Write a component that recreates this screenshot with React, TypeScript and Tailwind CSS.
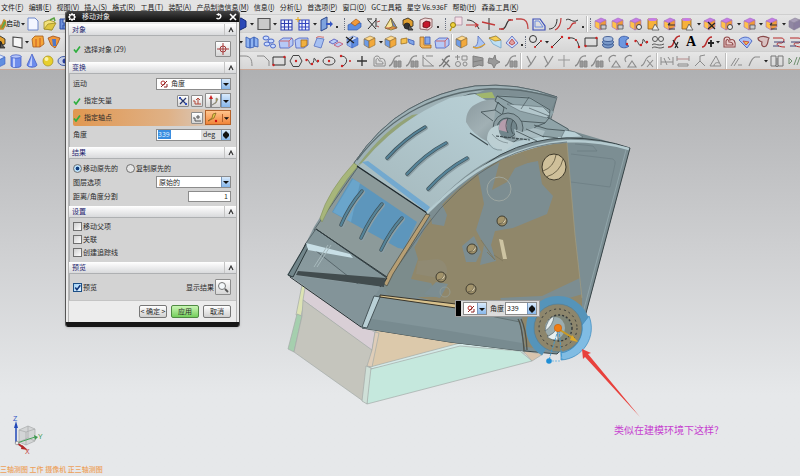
import type { ReactNode } from 'react';

const cube = (top: string, left: string, right: string, edge = '#6b5a86') => (
  <g stroke={edge} strokeWidth=".6" strokeLinejoin="round">
    <path d="M2 5 8 2l5 2-6 3z" fill={top} />
    <path d="M2 5l5 2v7l-5-3z" fill={left} />
    <path d="M7 7l6-3v7l-6 3z" fill={right} />
  </g>
);

const violetCube = cube('#c77be8', '#ffc24a', '#f09a3a', '#a06ac0');
const blueCube = cube('#dbe8ff', '#8fb4ef', '#5f8ee0', '#3c5fc0');
const goldCube = cube('#ffd98a', '#6d9be6', '#f2a93c', '#8a6a34');

const gray = '#8b8b8b';

const icons: Record<string, ReactNode> = {
  start: <path d="M5 13 9 4l3 2-4 7zM3 5l3 7" fill="#5aa84a" stroke="#c58a2b" strokeWidth="1.5" />,
  file: <path d="M3 2h7l3 3v9H3z" fill="#f3f6ff" stroke="#6c86c8" />,
  folder: (
    <g stroke="#9c8a2a" strokeWidth=".8">
      <path d="M2 6l5-2 6 2-3 8-8-1z" fill="#f3e27a" />
      <path d="M2 13l4-5 8-1-4 7z" fill="#e0c63f" />
      <path d="M8 4l4-2 1 3" fill="none" stroke="#58a03c" strokeWidth="1.5" />
    </g>
  ),
  save: <path d="M2 3h11v10H2zM5 3v4h6V3M5 13v-4h6v4" fill="#6f93dc" stroke="#2f4fa5" />,
  shade: <path d="M2 4l6-2 5 3v6l-6 3-5-4z" fill="#2c49b8" stroke="#152a78" />,
  frame: <path d="M2 2.500h12v11H2z" fill="#c9c9c9" stroke="#555" strokeWidth="1.200" />,
  grid: (
    <g fill="none" stroke="#2d3fb0" strokeWidth="1.100">
      <path d="M3 4h11v10H3zM3 7.500h11M3 11h11M6.500 4v10M10.500 4v10" fill="#f2f4ff" />
    </g>
  ),
  gridNew: (
    <g fill="none" stroke="#3448c0" strokeWidth="1.100">
      <path d="M4 4h10v10H4zM4 7.500h10M4 11h10M7 4v10M10.500 4v10" fill="#f2f4ff" />
      <path d="M3 1v5M.5 3.500h5" stroke="#e0a92a" />
    </g>
  ),
  door: (
    <g>
      <path d="M3 4l6-3v11l-6 3z" fill="#7ea3de" stroke="#2c478c" />
      <path d="M8 7h4V5l3 3-3 3V9H8z" fill="#3556c2" />
    </g>
  ),
  block: (
    <g>
      <path d="M1 9l4-2h9v4l-4 3H1z" fill="#5c8de0" stroke="#3059ac" strokeWidth=".7" />
      <path d="M4 7l5-4 4 3-5 4z" fill="#f19a39" stroke="#a0571b" strokeWidth=".7" />
    </g>
  ),
  axes: (
    <g fill="none" stroke="#2b2b2b">
      <path d="M3 13 11 4M3 4l8 9M2 3h5M11 2v9" />
      <path d="M12 6l3-1M12 10l2 1" stroke="#b14a4a" />
    </g>
  ),
  pyramid: (
    <g strokeWidth=".8" stroke="#7b6a3b">
      <path d="M8 2l6 10-6 2-6-2z" fill="#f1d04a" />
      <path d="M8 2l2 8-5 3-3-1z" fill="#f7e69a" />
      <path d="M8 2l6 10-4-2z" fill="#6f8ddc" />
      <path d="M3 12h10" stroke="#b33" />
    </g>
  ),
  gearbox: (
    <g stroke="#222" strokeWidth=".8">
      <path d="M3 4l5-2 5 3v5l-5 2-5-3z" fill="#e0a030" />
      <circle cx="7" cy="10" r="3" fill="#333" />
      <path d="M9 9l4 5H8z" fill="#555" />
    </g>
  ),
  redCube: (
    <g>
      <path d="M2 4l5-2 7 1v8l-4 3-8-1z" fill="#f2dada" stroke="#7c4e4e" strokeWidth=".8" />
      <path d="M5 7l3-2 4 1v4l-3 2-4-1z" fill="#c5172b" stroke="#5e0710" strokeWidth=".8" />
    </g>
  ),
  key: (
    <g>
      <path d="M7 1h7v8H7z" fill="#f6dfe6" stroke="#a78ba0" strokeWidth=".8" />
      <circle cx="5" cy="9" r="2.500" fill="#f0d23c" stroke="#927b14" />
      <path d="M4 11l-2 4" stroke="#c2a021" strokeWidth="1.500" />
    </g>
  ),
  trim: (
    <g fill="none">
      <path d="M2 4c6 0 9 3 12 9" stroke="#333" />
      <path d="M1 9h12M10 7l3 2-3 2" stroke="#c23a3a" strokeWidth="1.200" />
    </g>
  ),
  cross: (
    <g fill="none">
      <path d="M8 2v12" stroke="#333" />
      <path d="M1 6l13 3" stroke="#c23a3a" strokeWidth="1.300" />
    </g>
  ),
  sCurve: (
    <g fill="none">
      <path d="M3 13c7 1 4-10 10-9" stroke="#333" strokeWidth="1.200" />
      <path d="M1 13h5M10 4h5" stroke="#c23a3a" strokeWidth="1.500" />
    </g>
  ),
  corner: <path d="M1 3h5c5 0 7 4 7 10" fill="none" stroke="#c24a4a" strokeWidth="1.300" />,
  pent: (
    <g fill="none">
      <path d="M2 3h7l5 7v4H2z" stroke="#3d4fb8" strokeWidth="1.200" />
      <path d="M4 5h4l4 6H4z" stroke="#6c8be0" />
    </g>
  ),
  offset: (
    <g fill="none">
      <path d="M1 13c5 0 8-4 8-10" stroke="#333" />
      <path d="M7 14c4-2 6-6 6-12" stroke="#c23a3a" strokeWidth="1.200" />
    </g>
  ),
  bridge: (
    <g fill="none">
      <path d="M2 4c4-3 6 4 12 0" stroke="#333" />
      <path d="M3 13c6 0 2-7 9-6" stroke="#c23a3a" strokeWidth="1.300" />
    </g>
  ),
  vCube: violetCube,
  vCubeA: (
    <g>
      {violetCube}
      <path d="M8 9h5v4H8z" fill="#c9c9cf" stroke="#555" strokeWidth=".8" />
    </g>
  ),
  vCubeB: (
    <g>
      {violetCube}
      <circle cx="11" cy="11" r="2.500" fill="#eee" stroke="#444" />
    </g>
  ),
  vCyl: (
    <g>
      <path d="M3 3h9v10H3z" fill="#f7b13a" stroke="#8d5a1c" strokeWidth=".8" />
      <ellipse cx="7.500" cy="3.500" rx="4.500" ry="1.500" fill="#c77be8" />
      <path d="M10 8l4 6H7z" fill="#eee" stroke="#555" strokeWidth=".8" />
    </g>
  ),
  vCubeC: (
    <g>
      {violetCube}
      <path d="M6 9h7M6 9l2-2M13 13H7" stroke="#333" strokeWidth="1.200" fill="none" />
    </g>
  ),
  vCubeX: (
    <g>
      {violetCube}
      <path d="M6 6l7 7M13 7l-7 6" stroke="#222" strokeWidth="1.200" />
    </g>
  ),
  ghost: cube('#a99fb8', '#9087a3', '#8a7fa0', '#8a8298'),
  plane: <path d="M4 3l9 1v10l-9-2z" fill="#f6f6f6" stroke="#444" strokeWidth="1.100" />,
  orange: (
    <g stroke="#a35a1c" strokeWidth=".8">
      <path d="M2 5l3-3h8l1 8-4 3H3z" fill="#f4a63a" />
      <path d="M6 5v8M10 4v9" stroke="#c3471d" />
    </g>
  ),
  funnel: (
    <g strokeWidth=".8">
      <path d="M2 4l5-2 7 2-2 5-3 5-4-3z" fill="#f0963a" stroke="#994f1a" />
      <path d="M6 5h4v7H7z" fill="#5078c8" />
    </g>
  ),
  flag: (
    <g stroke="#3d62b8" strokeWidth=".9">
      <path d="M2 3l4 2v9l-4-1zM6 5l4-2v10l-4 1zM10 3l4 2v8l-4-1z" fill="#8fb3f0" />
    </g>
  ),
  chain: (
    <g fill="#cbdcff" stroke="#4a68c8">
      <ellipse cx="5" cy="4" rx="3" ry="2" />
      <ellipse cx="10" cy="7" rx="3" ry="2" />
      <ellipse cx="6" cy="10" rx="3" ry="2" />
      <ellipse cx="12" cy="12" rx="2.500" ry="2" />
    </g>
  ),
  slab: (
    <g stroke="#4a60c0" strokeWidth=".8">
      <path d="M1 7l4-3h9l1 2v5l-4 3H2z" fill="#b6c9f6" />
      <path d="M2 7h9v6M11 7l3-3" fill="none" stroke="#d0524f" />
    </g>
  ),
  slabGold: (
    <g stroke="#4a60c0" strokeWidth=".8">
      <path d="M1 6l4-2h9v7l-4 3H2z" fill="#b6c9f6" />
      <path d="M7 6h6v5l-3 2H7z" fill="#f1b03f" stroke="#a56d1d" />
    </g>
  ),
  sheet: (
    <g strokeWidth=".8">
      <path d="M3 12L6 4l7 1-3 9z" fill="#a6c0f2" stroke="#5570c0" />
      <path d="M5 4c3-3 6 0 8-1" fill="none" stroke="#cf4848" />
    </g>
  ),
  pads: (
    <g fill="#b9cdf7" stroke="#5b5fc0" strokeWidth=".9">
      <path d="M1 8l5-3 4 2-5 3z" />
      <path d="M6 11l5-3 4 2-5 3z" stroke="#c45a78" />
    </g>
  ),
  cutCube: (
    <g>
      {blueCube}
      <path d="M1 3l8 6M2 9l6-6" stroke="#222" strokeWidth="1.200" />
    </g>
  ),
  bCube: blueCube,
  gCube: goldCube,
  patch: (
    <g strokeWidth=".8">
      <path d="M1 5l6-1v5l-6 1z" fill="#f5c150" stroke="#a0701e" />
      <path d="M8 5l6 2v4l-5-2z" fill="#80a6ea" stroke="#3c5cb0" />
    </g>
  ),
  bucket: (
    <g strokeWidth=".8">
      <path d="M3 3h4v8h7v3H5l-2-2z" fill="#f2b45a" stroke="#a0651e" />
      <path d="M8 3h5v7H8z" fill="#87a9ea" stroke="#3c5cb0" />
    </g>
  ),
  wedge: (
    <g strokeWidth=".8">
      <path d="M2 13c5 0 5-6 5-11l7 8c-3 4-8 5-12 3z" fill="#a9c4f4" stroke="#5570c0" />
      <path d="M2 13c3 2 8 0 12-3" fill="none" stroke="#dca12f" strokeWidth="1.500" />
    </g>
  ),
  ramp: (
    <g strokeWidth=".8">
      <path d="M2 4l7-2 5 4v8l-8-4z" fill="#bfe0f4" stroke="#6fa1c8" />
      <path d="M2 4l7-2 5 4-6 1z" fill="#f6cf53" stroke="#a8802a" />
    </g>
  ),
  diamond: (
    <g fill="#d4e0fb" stroke="#5b6cc0" strokeWidth=".9">
      <path d="M8 2l6 7-6 5-6-5z" />
      <path d="M8 5l3 4-3 2-3-2z" fill="#e0a1a1" stroke="#b44" />
    </g>
  ),
  circCurve: (
    <g fill="none">
      <circle cx="5" cy="5" r="3.500" stroke="#333" />
      <path d="M7 13l6-6" stroke="#333" />
      <circle cx="7" cy="13" r="1" fill="#c22" />
      <circle cx="13" cy="7" r="1" fill="#c22" />
    </g>
  ),
  line: (
    <g>
      <path d="M3 13 13 3" stroke="#333" />
      <circle cx="3" cy="13" r="1.200" fill="#c22" />
      <circle cx="13" cy="3" r="1.200" fill="#c22" />
    </g>
  ),
  arc: (
    <g>
      <path d="M3 4c6-1 9 3 10 9" stroke="#333" fill="none" />
      <circle cx="3" cy="4" r="1.200" fill="#c22" />
      <circle cx="13" cy="13" r="1.200" fill="#c22" />
      <circle cx="10" cy="6" r="1.100" fill="#c22" />
    </g>
  ),
  rect: (
    <g>
      <path d="M2 4h12v8H2z" stroke="#333" fill="none" />
      <circle cx="2.500" cy="12" r="1.200" fill="#c22" />
      <circle cx="13.500" cy="4" r="1.200" fill="#c22" />
    </g>
  ),
  rolls: (
    <g fill="#7898c8" stroke="#2d4a85" strokeWidth=".8">
      <ellipse cx="8" cy="11" rx="5.500" ry="3" />
      <ellipse cx="8" cy="8" rx="5.500" ry="3" />
      <ellipse cx="8" cy="5" rx="5" ry="2.500" fill="#a5bce0" />
    </g>
  ),
  wrap: (
    <g>
      <path d="M3 5c2-4 8-3 10-1l-3 2v5l3 1c-3 3-9 2-10-1z" fill="#6e97df" stroke="#3052a0" strokeWidth=".8" />
      <circle cx="11" cy="10" r="1.200" fill="#c22" />
    </g>
  ),
  spline: (
    <g>
      <path d="M2 7c3-3 3 6 6 4s1-8 3-5 2 4 4 2" stroke="#444" fill="none" />
      <circle cx="2.500" cy="7" r="1.200" fill="#c22" />
      <circle cx="8" cy="11" r="1.200" fill="#c22" />
      <circle cx="14" cy="8" r="1.200" fill="#c22" />
    </g>
  ),
  rings: (
    <g fill="none" stroke="#555">
      <circle cx="5" cy="5" r="2.500" />
      <circle cx="11" cy="5" r="2.500" />
      <path d="M2 11c3-3 5 2 12-1M2 14c4-3 6 2 12-1" />
    </g>
  ),
  redS: (
    <g fill="none">
      <path d="M2 13c8 1 4-11 12-11" stroke="#b82a2a" strokeWidth="1.500" />
      <path d="M7 6l5 8M12 8l-3 6" stroke="#222" strokeWidth="1.200" />
    </g>
  ),
  redDots: (
    <g fill="none">
      <path d="M2 13c6 0 3-10 10-10" stroke="#b82a2a" strokeWidth="1.500" />
      <path d="M11 6v7M8 9h6" stroke="#222" strokeWidth="1.800" />
    </g>
  ),
  pinkLoop: (
    <g fill="none" stroke="#8f4646" strokeWidth="1.100">
      <path d="M3 6c0-4 6-4 6 0 4-2 6 2 5 7H3z" fill="#ead0d0" />
      <path d="M5 7c1-3 3-1 3 1 2 0 4 0 4 3H5z" />
    </g>
  ),
  fan: (
    <g strokeWidth=".9">
      <path d="M1 6c4-4 10-4 13 1l-5 7z" fill="#a9c2f6" stroke="#4a63c0" />
      <path d="M5 7l6 1-3 3z" fill="#e9c44a" stroke="#c44" />
    </g>
  ),
  shield: <path d="M3 4c3-2 7-2 11 0-2 3 0 5-3 8-3 2-5-1-4-4-2-1-4-1-4-4z" fill="#d9c2c2" stroke="#8a4a4a" strokeWidth="1.200" />,
  weave: (
    <g fill="none">
      <path d="M2 4h8c5 0 3 6-1 5s-5 4 5 4" stroke="#b82a2a" />
      <path d="M3 8h11M2 12h6" stroke="#447" />
    </g>
  ),
  cylinder: (
    <g stroke="#3a55c0" strokeWidth=".7">
      <path d="M3 3v10c1 2 9 2 10 0V3z" fill="#6d8cec" />
      <path d="M5 4h2v10H5z" fill="#c3d0fb" stroke="none" />
      <ellipse cx="8" cy="3.500" rx="5" ry="1.700" fill="#b5c6fa" />
    </g>
  ),
  cone: (
    <g>
      <path d="M8 1l5 11c-1 3-9 3-10 0z" fill="#6d8cec" stroke="#3a55c0" strokeWidth=".7" />
      <path d="M8 2v11H5z" fill="#c3d0fb" />
    </g>
  ),
  ball: (
    <g>
      <circle cx="8" cy="8" r="5" fill="#e8cf2c" stroke="#a28d18" strokeWidth=".7" />
      <circle cx="6.500" cy="6" r="2" fill="#fbf2a8" />
    </g>
  ),
  eye: (
    <g>
      <ellipse cx="8" cy="8" rx="6" ry="4.500" fill="#c5cfe8" stroke="#455ea8" />
      <circle cx="9" cy="8" r="2.500" fill="#2c3f9c" />
    </g>
  ),
  grayArc: <path d="M2 3h5c5 0 7 3 7 10" fill="none" stroke={gray} />,
  grayBend: <path d="M2 3h7l5 5v5" fill="none" stroke={gray} />,
  hexagon: (
    <g>
      <path d="M5 2.500h6l3 5.500-3 5.500H5L2 8z" fill="none" stroke="#444" />
      <circle cx="8" cy="8" r="1.200" fill="#c22" />
    </g>
  ),
  ellipse: (
    <g>
      <ellipse cx="8" cy="8" rx="6" ry="4" fill="none" stroke="#444" />
      <circle cx="8" cy="8" r="1.200" fill="#c22" />
    </g>
  ),
  bow: (
    <g>
      <path d="M4 3c6 0 8 6 2 10" fill="none" stroke="#444" />
      <circle cx="4" cy="3" r="1.200" fill="#c22" />
      <circle cx="5" cy="13" r="1.200" fill="#c22" />
      <circle cx="13" cy="8" r="1" fill="#c22" />
    </g>
  ),
  plus: <path d="M8 3v10M3 8h10" stroke="#333" strokeWidth="1.300" />,
  gLoop: (
    <g fill="none" stroke={gray}>
      <path d="M3 6c0-4 6-4 6 0 4-2 6 2 5 7H3z" />
      <path d="M5 7c1-3 3-1 3 1 2 0 4 0 4 3H5z" />
    </g>
  ),
  gCurveBox: (
    <g stroke={gray}>
      <path d="M2 13C7 12 5 2 13 3" fill="none" strokeWidth="1.300" />
      <path d="M7 8h3v6H7zM11 8h3v6h-3z" fill="#999" />
    </g>
  ),
  gSlope: <path d="M3 2v11h11M3 4l10 9M6 3l7 0" fill="none" stroke={gray} />,
  gCross: <path d="M2 13C8 12 6 3 13 3M5 6l8 8M12 7l-6 7" fill="none" stroke="#777" strokeWidth="1.300" />,
  gShapes: (
    <g fill="none" stroke={gray}>
      <path d="M2 4h5M4.500 2v5M9 3h5v4H9z" />
      <circle cx="5" cy="11" r="2.500" />
      <circle cx="12" cy="11" r="2" />
    </g>
  ),
  gSheet: <path d="M3 3l10 2v8L9 12l-6 2zM3 9l10-2" fill="#999" stroke="#808080" />,
  gStar: <path d="M3 5l4 1 2-4 1 5 4 2-4 2-2 4-2-4-4-1z" fill="#999" stroke="#808080" />,
  gFork: <path d="M4 3l4 8 5-8M8 11l-3 3" fill="none" stroke={gray} strokeWidth="1.200" />,
  gPlus: <path d="M8 2v12M2 7h12" stroke="#999" />,
  gTri: <path d="M4 9c-3-4 2-8 6-6M10 8l4 6H6z" fill="none" stroke={gray} strokeWidth="1.100" />,
  gFx: <path d="M2 13C7 12 5 3 12 3M8 7l6 7M14 7l-6 7" fill="none" stroke={gray} strokeWidth="1.100" />,
  gDim: <path d="M2 4v8M14 4v8M2 9h12M5 5l3 7M9 4l2 3" fill="none" stroke={gray} />,
  gDimRed: (
    <g fill="none" stroke={gray}>
      <path d="M2 3v5M14 3v5M3 11h10v2H3z" />
      <path d="M2 6h12" stroke="#b48a8a" />
    </g>
  ),
  gFold: <path d="M3 13L8 8l5 5M8 8V3l5-1" fill="none" stroke={gray} />,
  gAngle: <path d="M2 13L8 3l5 10zM6 13c0-3 3-4 5-3" fill="none" stroke={gray} />,
  gPar: <path d="M3 13L8 5M6 13l5-8M10 12h4" fill="none" stroke={gray} />,
  gElbow: <path d="M3 13c2-5 3-8 6-9h5" fill="none" stroke={gray} strokeWidth="1.200" />,
  gBook: <path d="M2 3h5v10H2zM9 3h5v10H9zM8 5v7M6 12l2 2 2-2" fill="none" stroke="#777" />,
  gHatch: <path d="M2 5v6l3-3zM7 12l3-8M10 12l3-8" fill="none" stroke="#6f8f6f" />,
};

function ToolIcon({ name }: { name: string }) {
  if (name === '.') {
    return (
      <svg viewBox="0 0 4 16" className="h-4 w-1 shrink-0">
        <path d="M1 10h2v2H1z" fill="#333" />
      </svg>
    );
  }
  if (name === 'v') {
    return (
      <button type="button" aria-label="更多" className="h-4 w-1 shrink-0">
        <svg viewBox="0 0 4 16" className="h-4 w-1">
          <path d="M0 7h4L2 9.500z" fill="#222" />
        </svg>
      </button>
    );
  }
  if (name === 'A') {
    return (
      <button type="button" className="w-4 shrink-0 text-center font-['Liberation_Serif',serif] text-[14px] leading-4 font-bold text-black">
        A
      </button>
    );
  }
  return (
    <button type="button" aria-label={name} className="h-4 w-4 shrink-0">
      <svg viewBox="0 0 16 16" className="h-4 w-4">
        {icons[name]}
      </svg>
    </button>
  );
}

function ToolGroup({ items, className }: { items: string; className: string }) {
  return (
    <div className={`flex shrink-0 items-center justify-between ${className}`}>
      {items.split(' ').map((name, i) => (
        <ToolIcon key={i} name={name} />
      ))}
    </div>
  );
}

const Grip = () => <div className="mx-px h-3 w-[2px] shrink-0 border-l border-dotted border-gray-500" />;
const Divider = () => <div className="mx-px h-4 w-[2px] shrink-0 border-l border-[#bdbdbd] bg-white" />;

const menus = [
  ['文件', 'F'],
  ['编辑', 'E'],
  ['视图', 'V'],
  ['插入', 'S'],
  ['格式', 'R'],
  ['工具', 'T'],
  ['装配', 'A'],
  ['产品制造信息', 'M'],
  ['信息', 'I'],
  ['分析', 'L'],
  ['首选项', 'P'],
  ['窗口', 'O'],
  ['GC工具箱', ''],
  ['星空 V6.936F', ''],
  ['帮助', 'H'],
  ['森淼工具', 'K'],
];

function MenuBar() {
  return (
    <nav className="flex h-[14px] items-center gap-[5px] overflow-hidden pl-px whitespace-nowrap text-[#222]">
      {menus.map(([label, key]) => (
        <a key={label} href="#" className="shrink-0">
          {label}
          {key && (
            <>
              (<span className="underline">{key}</span>)
            </>
          )}
        </a>
      ))}
    </nav>
  );
}

function Toolbars() {
  const row = 'flex items-center overflow-hidden border-t border-[#cfcfcf] bg-linear-to-b from-[#e6e6e6] to-[#d6d6d6]';
  return (
    <div>
      <div className={`${row} h-[18px]`}>
        <div className="flex w-[74px] shrink-0 items-center justify-between">
          <button type="button" className="flex items-center">
            <svg viewBox="5 0 6 16" className="h-4 w-[6px]">{icons.start}</svg>
            启动
          </button>
          <ToolIcon name="v" />
          <ToolIcon name="file" />
          <ToolIcon name="folder" />
          <ToolIcon name="save" />
        </div>
        <ToolGroup className="ml-[159px] w-[106px]" items="shade v frame v grid gridNew v door ." />
        <div className="w-1 shrink-0" />
        <Grip />
        <ToolGroup className="w-[93px]" items="block axes pyramid gearbox redCube ." />
        <div className="w-1 shrink-0" />
        <Grip />
        <ToolGroup className="w-[137px]" items="key trim cross sCurve corner pent offset bridge ." />
        <Divider />
        <Grip />
        <ToolGroup className="w-[210px]" items="vCubeA vCubeA vCubeB vCyl vCubeC vCyl v vCubeX vCubeB v vCubeA v vCubeC v ghost" />
      </div>
      <div className={`${row} h-[19px]`}>
        <ToolGroup className="-ml-2 w-[70px]" items="gearbox plane v orange funnel" />
        <ToolGroup className="ml-[177px] w-[211px]" items="v flag chain slab slabGold sheet pads cutCube gCube v gCube patch bucket slab" />
        <Divider />
        <ToolGroup className="w-[70px]" items="gCube wedge ramp diamond ." />
        <Grip />
        <ToolGroup className="w-[276px]" items="circCurve v line arc rect rolls wrap spline rings redS A redDots v pinkLoop fan shield weave weave" />
      </div>
      <div className={`${row} h-[19px] border-b border-b-[#c9a898]`}>
        <ToolGroup className="-ml-2 w-[80px]" items="bCube cylinder cone ball eye" />
        <ToolGroup
          className="ml-[166px] w-[281px]"
          items="grayArc grayBend rect hexagon spline ellipse bow plus gLoop gCurveBox gCurveBox gSlope gCross gShapes gSheet gStar gCurveBox"
        />
        <Divider />
        <ToolGroup className="w-[132px]" items="gFork gFork gPlus gCurveBox gCurveBox gTri gTri gFx" />
        <Divider />
        <ToolGroup className="w-[65px]" items="gDim gDimRed gFold gAngle" />
        <Divider />
        <ToolGroup className="w-[75px]" items="gPar gElbow v gBook gHatch" />
      </div>
    </div>
  );
}

function Section({ title, className, children }: { title: string; className: string; children: ReactNode }) {
  return (
    <section>
      <h2 className="flex h-[11px] items-center justify-between bg-linear-to-b from-white to-[#d9dadc] pl-[3px] text-[#25256e]">
        {title}
        <button type="button" aria-label={`收起${title}`} className="flex h-[11px] w-3 items-center justify-center border-l border-[#c4c4c4]">
          <svg viewBox="0 0 8 8" className="h-2 w-2">
            <path d="M2 6l2-4 2 4" fill="none" stroke="#333" strokeWidth="1.200" />
          </svg>
        </button>
      </h2>
      <div className={`border-t border-l border-[#aeb0b2] bg-[#d3d3d3] pr-[5px] pl-[3px] ${className}`}>{children}</div>
    </section>
  );
}

const Check = () => (
  <svg viewBox="0 0 8 8" className="mr-[3px] h-2 w-2">
    <path d="M1 4.500l2 2.500L7 1.500" fill="none" stroke="#2fae3e" strokeWidth="1.700" />
  </svg>
);

function ArrowBox({ spin }: { spin?: boolean }) {
  return (
    <span className="pointer-events-none flex h-full w-[9px] shrink-0 items-center justify-center border-l border-[#7797bd] bg-linear-to-b from-[#d9eafb] to-[#86b6ea]">
      <svg viewBox="0 0 8 8" className="h-2 w-2">
        {spin ? <path d="M4 0l3 3v2L4 8 1 5V3z" fill="#111" /> : <path d="M1 3h6L4 6z" fill="#111" />}
      </svg>
    </span>
  );
}

const AngleIcon = () => (
  <svg viewBox="0 0 8 8" className="h-2 w-2 shrink-0">
    <circle cx="3" cy="3" r="2" fill="none" stroke="#b53030" />
    <path d="M1 7l6-6M4 7h3V4" fill="none" stroke="#8c2020" />
  </svg>
);

function SmallButton({ label, className, children }: { label: string; className: string; children: ReactNode }) {
  return (
    <button
      type="button"
      aria-label={label}
      className={`flex items-center justify-center rounded-[1px] border border-[#8c8c8c] bg-linear-to-b from-white to-[#d5d5d5] ${className}`}
    >
      {children}
    </button>
  );
}

const boxClass =
  'relative h-[9px] w-[9px] appearance-none border border-[#6f6f6f] bg-linear-to-br from-[#cfcfcf] to-white checked:border-[#1d4f86] checked:from-[#9fd0f5] checked:to-[#e3f4ff]';

function CheckRow({ label, checked }: { label: string; checked?: boolean }) {
  return (
    <label className="flex h-[13px] items-center gap-px">
      <span className="relative flex">
        <input type="checkbox" defaultChecked={checked} className={boxClass} />
        {checked && (
          <svg viewBox="0 0 8 8" className="pointer-events-none absolute inset-0 h-[9px] w-[9px]">
            <path d="M2 4l1.500 2L6.500 2" fill="none" stroke="#10357a" strokeWidth="1.400" />
          </svg>
        )}
      </span>
      {label}
    </label>
  );
}

function MoveDialog() {
  return (
    <form className="absolute top-[11px] left-[65px] w-[175px] overflow-hidden rounded-t-[3px] rounded-b-[3px] border-x border-[#555] bg-[#ececec] text-[#2a2a2a] shadow">
      <header className="flex h-[11px] items-center gap-[6px] bg-linear-to-b from-[#444] to-[#0d0d0d] px-[2px] text-[#f0f0f0]">
        <svg viewBox="0 0 8 8" className="h-2 w-2">
          <circle cx="4" cy="4" r="2.500" fill="none" stroke="#fff" strokeWidth="1.300" />
          <path d="M4 0v1M4 7v1M0 4h1M7 4h1M1 1l1 1M6 6l1 1M1 7l1-1M6 2l1-1" stroke="#fff" />
        </svg>
        <h1>移动对象</h1>
        <button type="button" aria-label="重置" className="ml-auto">
          <svg viewBox="0 0 8 8" className="h-2 w-2">
            <path d="M4 1.500h1a2.300 2.300 0 1 1-3.500 3.500" fill="none" stroke="#fff" strokeWidth="1.400" />
            <path d="M1 1.500l3-1.500v3z" fill="#fff" />
          </svg>
        </button>
        <button type="button" aria-label="关闭">
          <svg viewBox="0 0 8 8" className="h-2 w-2">
            <path d="M1 1l6 6M7 1L1 7" stroke="#fff" strokeWidth="1.600" />
          </svg>
        </button>
      </header>

      <div className="mx-[2px] border-x border-[#b5b5b5] pt-[2px]">
        <Section title="对象" className="flex h-[27px] items-center">
          <Check />
          选择对象 (29)
          <SmallButton label="选择" className="ml-auto h-4 w-4">
            <svg viewBox="0 0 12 12" className="h-3 w-3">
              <circle cx="6" cy="6" r="3" fill="none" stroke="#a53a3a" />
              <path d="M6 0v12M0 6h12" stroke="#a53a3a" />
            </svg>
          </SmallButton>
        </Section>

        <Section title="变换" className="h-[74px] pt-px">
          <div className="flex h-[17px] items-center justify-between">
            <label htmlFor="motion">运动</label>
            <div className="flex h-3 w-[75px] items-center border border-[#8c8c8c] bg-white pl-[3px]">
              <AngleIcon />
              <select id="motion" className="min-w-0 flex-1 appearance-none pl-[3px]">
                <option>角度</option>
              </select>
              <ArrowBox />
            </div>
          </div>
          <div className="flex h-[17px] items-center">
            <Check />
            指定矢量
            <SmallButton label="反向" className="ml-auto h-3 w-3">
              <svg viewBox="0 0 10 10" className="h-[10px] w-[10px]">
                <path d="M2 2l6 6M8 2L2 8" stroke="#23346e" strokeWidth="1.200" />
                <path d="M1 1h2v2H1zM7 7h2v2H7z" fill="#2f50c0" />
              </svg>
            </SmallButton>
            <SmallButton label="矢量构造器" className="ml-[2px] h-3 w-3">
              <svg viewBox="0 0 10 10" className="h-[10px] w-[10px]">
                <path d="M1 5h2v3h6M6 8V2M4 4l2-2 2 2" fill="none" stroke="#b3483a" />
              </svg>
            </SmallButton>
            <SmallButton label="矢量类型" className="ml-[2px] h-[15px] w-4">
              <svg viewBox="0 0 12 12" className="h-3 w-3">
                <path d="M4 12V3" stroke="#333" />
                <path d="M2 4l2-4 2 4z" fill="#c22" />
                <path d="M5 10l4-3V3l2 1-2 4z" fill="#b9a84a" stroke="#777" strokeWidth=".6" />
              </svg>
            </SmallButton>
            <span className="flex h-[15px] border border-l-0 border-[#8c8c8c]">
              <ArrowBox />
            </span>
          </div>
          <div className="flex h-[17px] items-center rounded-[2px] bg-linear-to-r from-[#e0974f] via-[#dfb186] via-60% to-[#d3d3d3]">
            <Check />
            指定轴点
            <SmallButton label="点构造器" className="ml-auto h-3 w-3">
              <svg viewBox="0 0 10 10" className="h-[10px] w-[10px]">
                <path d="M1 5h2v3h6M6 2v4M4 4h4" fill="none" stroke="#555" />
              </svg>
            </SmallButton>
            <button
              type="button"
              aria-label="点类型"
              className="ml-[2px] flex h-[15px] w-[26px] items-center justify-between border border-[#b5622a] bg-linear-to-b from-[#ffc58c] to-[#f08436]"
            >
              <svg viewBox="0 0 14 12" className="h-3 w-[14px]">
                <path d="M2 9l4-3 1-4 3-1-2 5z" fill="#e2cf4a" stroke="#7a5a1a" strokeWidth=".7" />
                <circle cx="10" cy="9" r="1.200" fill="#c11" />
              </svg>
              <svg viewBox="0 0 8 8" className="h-2 w-2 border-l border-[#b5622a]">
                <path d="M1 3h6L4 6z" fill="#111" />
              </svg>
            </button>
          </div>
          <div className="flex h-[17px] items-center">
            <label htmlFor="angle">角度</label>
            <div className="ml-auto flex h-3 w-[75px] items-center border border-[#8c8c8c] bg-[#dedede]">
              <span className="flex h-full w-[44px] items-center bg-white pl-px">
                <input id="angle" defaultValue="339" className="h-[9px] w-[13px] bg-[#3a8de0] text-[#dff0ff]" />
              </span>
              <span className="flex-1 pl-[2px]">deg</span>
              <ArrowBox spin />
            </div>
          </div>
        </Section>

        <Section title="结果" className="h-[48px] pt-[2px]">
          <div className="flex h-[14px] items-center gap-2">
            {['移动原先的', '复制原先的'].map((label, i) => (
              <label key={label} className="flex items-center gap-px">
                <input
                  type="radio"
                  name="result"
                  defaultChecked={i === 0}
                  className="h-[9px] w-[9px] appearance-none rounded-full border border-[#6f6f6f] bg-[#e6e6e6] checked:bg-[radial-gradient(circle,#123c7c_30%,#b9e0fa_45%)]"
                />
                {label}
              </label>
            ))}
          </div>
          <div className="flex h-[14px] items-center justify-between">
            <label htmlFor="layer">图层选项</label>
            <div className="flex h-3 w-[75px] items-center border border-[#8c8c8c] bg-white">
              <select id="layer" className="min-w-0 flex-1 appearance-none pl-[2px]">
                <option>原始的</option>
              </select>
              <ArrowBox />
            </div>
          </div>
          <div className="flex h-[14px] items-center justify-between">
            <label htmlFor="split">距离/角度分割</label>
            <input id="split" defaultValue="1" className="h-[11px] w-[43px] border border-[#8c8c8c] bg-white pr-[2px] text-right" />
          </div>
        </Section>

        <Section title="设置" className="h-[45px] pt-[2px]">
          <CheckRow label="移动父项" />
          <CheckRow label="关联" />
          <CheckRow label="创建追踪线" />
        </Section>

        <Section title="预览" className="flex h-[27px] items-center">
          <CheckRow label="预览" checked />
          <span className="mr-px ml-auto">显示结果</span>
          <SmallButton label="显示结果" className="h-4 w-4">
            <svg viewBox="0 0 12 12" className="h-3 w-3">
              <circle cx="5" cy="5" r="3.500" fill="#f4f8fa" stroke="#777" />
              <path d="M8 8l3 3" stroke="#555" strokeWidth="1.800" />
            </svg>
          </SmallButton>
        </Section>

        <footer className="flex h-[22px] items-center justify-end gap-1 border-t border-[#c4c4c4] pr-[5px]">
          <button type="submit" className="h-[13px] w-7 rounded-[2px] border border-[#777] bg-linear-to-b from-white to-[#d0d0d0] whitespace-nowrap">
            &lt; 确定 &gt;
          </button>
          <button type="button" className="h-[13px] w-7 rounded-[2px] border border-[#4f8a44] bg-linear-to-b from-[#c9f5b4] to-[#74cf5c]">
            应用
          </button>
          <button type="button" className="h-[13px] w-7 rounded-[2px] border border-[#777] bg-linear-to-b from-white to-[#d0d0d0]">
            取消
          </button>
        </footer>
      </div>
      <div className="h-[5px] bg-[#161616]" />
    </form>
  );
}

const upperSlots = [
  'M387 158Q404 139 425 127',
  'M407 174Q425 154 446 143',
  'M428 189Q445 170 467 158',
];
const lowerSlots = ['M341 225Q349 206 362 191', 'M361 238Q370 218 382 204', 'M381 250Q390 231 402 218'];
const bores = [
  [502, 221],
  [472, 249],
  [471, 289],
  [441, 277],
];

function Model() {
  return (
    <svg viewBox="0 70 800 406" className="block w-full" fill="none" strokeLinejoin="round">
      <defs>
        <linearGradient id="cover" x1="0" y1="1" x2="1" y2="0">
          <stop offset="0" stopColor="#a3b6ba" />
          <stop offset=".6" stopColor="#b3cad0" />
          <stop offset="1" stopColor="#bdd3d8" />
        </linearGradient>
        <linearGradient id="drum" x1="0" y1="0" x2="1" y2="1">
          <stop offset="0" stopColor="#8b9a9f" />
          <stop offset=".5" stopColor="#a1b0b4" />
          <stop offset="1" stopColor="#788a8f" />
        </linearGradient>
        <linearGradient id="flap" x1="0" y1="0" x2="0" y2="1">
          <stop offset="0" stopColor="#74878c" />
          <stop offset="1" stopColor="#90a0a4" />
        </linearGradient>
        <clipPath id="plate">
          <path d="M373 297L387 277 417 235 429 213Q465 170 500 155 533 141 567 139L583 300V354L373 328z" />
        </clipPath>
      </defs>

      {/* original position of the body */}
      <g stroke="#a4aaa8" strokeWidth=".7">
        <path d="M302 285l5 3-2 12-4 16-5-1z" fill="#dde3b4" />
        <path d="M297 314l5 2-8 36-6-3z" fill="#a5cfae" />
        <path d="M305 288l57 38 13 6-3 19-69-51z" fill="#d9cfd6" />
        <path d="M303 300l69 50-4 18-5 33-69-49 8-36z" fill="#c5c5bd" />
        <path d="M376 330l84 12 65 9-90 8-66 9z" fill="#dcc9ab" />
        <path d="M370 367l90-24 63 7 2 3-62 0-93 16z" fill="#d5eae8" />
        <path d="M371 369l89-23 60 5 12 10-165 43-1-28z" fill="#c5e8dd" />
        <path d="M366 366l5 2-4 36-5-3z" fill="#cfe0d8" />
        <path d="M372 350l3-18 4 1-7 34-5-1z" fill="#dfcdb8" />
        <path d="M523 351l20 3-11 7z" fill="#d9c4ae" />
      </g>

      {/* rear plate and curved cover */}
      <g stroke="#4d5b5f" strokeWidth=".8">
        <path d="M287 275L306 243 314 227 354 163Q378 127 409 109 440 91 475 86 517 82 557 97L549 124 630 148 583 325 380 290 362 328 291 277z" fill="url(#flap)" stroke="none" />
        <path d="M354 163Q378 127 409 109 440 91 475 86 517 82 557 97L549 126" />
        <path d="M354 163Q378 127 409 109 440 91 475 86 517 82 557 97L520 90 470 94Q410 112 358 167z" fill="#9eb1b6" />
        <path d="M358 167Q394 122 450 98L475 94 550 128 567 139Q533 141 500 155 465 170 427 213z" fill="url(#cover)" stroke="none" />
        <path d="M475 94l25 14 28-4 20 12 9-19-37-8-30-1z" fill="#7e8f94" stroke="none" />
        <path d="M314 230l44-63 69 46-40 65z" fill="#8c9a9a" />
        <path d="M306 243l10-14 71 49-14 18z" fill="#839599" />
      </g>
      <path d="M320 218Q328 191 354 163l4 3Q337 190 322 222z" fill="#a7b67b" stroke="#7d8b55" strokeWidth=".5" />
      <path d="M362 163Q386 134 418 114l-6 1Q384 130 358 165z" fill="#93a377" />
      <path d="M476 94l16-2 3 6-13 0z" fill="#a1b66d" />
      <path d="M357 160Q384 125 418 108 452 91 488 89 524 88 556 98" stroke="#5b6a6e" strokeWidth="1.300" />
      <path d="M362 162l6-1 62 46-3 5z" fill="#73a9cf" />
      <path d="M352 178l65 44-13 27-6-1-66-36z" fill="#5d96bc" />
      <path d="M360 183l-7-4-20 33 18 10z" fill="#6aa5cb" />
      <path d="M357 166l70 47" stroke="#202a2e" strokeWidth="1.300" />
      <path d="M316 229l71 49" stroke="#3a4649" />

      {[...upperSlots, ...lowerSlots].map((d) => (
        <g key={d} strokeLinecap="round">
          <path d={d} stroke="#8c9fa5" strokeWidth="4" transform="translate(1 1)" />
          <path d={d} stroke="#3f535b" strokeWidth="3.500" />
          <path d={d} stroke="#568499" strokeWidth="2" />
        </g>
      ))}

      {/* drive unit behind the cover */}
      <g stroke="#3f4c50" strokeWidth=".8">
        <path d="M466 122q0-14 12-19 8-4 18-3l16 8-4 14-20 20q-16-8-22-20z" fill="url(#drum)" stroke="none" />
        <path d="M497 95l33 2 24 15-4 6 19 11-1 8-30 0-28 6-18-4z" fill="#8fa3a8" stroke="none" />
        <path d="M470 133l18 12" strokeWidth="1.200" />
        <path d="M497 96l33 2 20 12-1 8M497 96l-2 5 12 8M497 96l24 13 28 9-4 5-26-2" />
        <path d="M507 104l36 3 7 7-3 4-27-7z" fill="#b3c7cc" strokeWidth=".4" />
        <path d="M529 108l20 8M521 109l8-12" strokeWidth=".6" />
        <path d="M549 118l19 11 1 3M545 123l-10 4-3 8 26 3M569 131l-22-2-13-4" />
        <path d="M481 112l14-2 3-8 6 6-2 8M481 112l12 9M495 110l9 6" />
        <circle cx="508" cy="128" r="15" fill="#8a9ca1" />
        <circle cx="507" cy="128" r="10" fill="#71858b" />
        <path d="M499 130q-1-10 8-11v13z" fill="#b59cab" stroke="none" />
        <path d="M508 118q-4 8 0 15M513 120q-4 8 0 14" />
        <path d="M487 140q0-13 12-15-2 9 6 14l10 4-10 8q-12-2-18-11z" fill="#bccfd3" stroke="none" />
        <path d="M492 134q6 8 16 9M488 142q4 9 14 8" strokeWidth=".4" />
        <path d="M514 129l8 3 12-4 11 3-3 6-26 2z" fill="#a9bcc1" stroke="none" />
        <path d="M516 131l21 10M526 129l18 8" />
        <path d="M565 130l10 2 8 5-22 1z" fill="#b9d0d6" strokeWidth=".4" />
        <path d="M496 136l34 4" strokeDasharray="3 1" strokeWidth="1.200" />
      </g>

      {/* front plate */}
      <path
        d="M362 328L373 297 387 277 417 235 427 213Q440 198 450 192 478 168 500 155 533 138 567 138 602 138 630 148L582 328 557 354 525 351 450 342z"
        fill="#7c8e93"
        stroke="#394548"
      />
      <g clipPath="url(#plate)">
        <path d="M387 290L417 243 431 217Q465 177 504 158 538 144 567 143L575 235 582 298 582 350 525 348 522 315 455 306z" fill="#90876a" />
        <path d="M478 173l30-15 14 6 16-3 4 23 11 12-6 18-34 14-18 3-4 14 5 16-16 4 4-20-8-15 8-26z" fill="#7c8d91" />
        <path d="M500 160l21-8 9 10-15 6-8 14-15 8z" fill="#8e876d" />
        <path d="M430 211l11-9 6 13-3 11-12-2z" fill="#7c8d91" />
        <path d="M383 287l30-44 5 16-7 20 20 4 8 14-49 0z" fill="#7c8c8c" />
        <path d="M462 246l12-10 7 16-5 10-10 0zM448 284l-12-2-12 12 16 4zM500 298l42-2 38-18 3 16-28 8-50 4z" fill="#7c8d91" />
        <path d="M418 261l20-2q10 3 9 14l-9 5-22-4z" fill="#908a73" />
      </g>
      <path d="M427 213Q470 170 502 158 540 142 570 141 602 141 629 149" stroke="#b5cbd0" strokeWidth="2.500" />
      <path d="M390 277L424 229Q455 186 500 160 532 144 567 142" stroke="#536064" strokeWidth=".7" />
      <path d="M384 284l4-10 38-60 4 1-37 59-6 12z" fill="#b79f74" stroke="#4f5045" strokeWidth=".8" />
      <path d="M567 143l8 92 7 63" stroke="#a39c80" strokeWidth=".7" />
      <path d="M571 154l42 5q3 2 2 5l-5 23-39-5M575 144l18 2 4 5h-20" stroke="#6c7d82" strokeWidth=".7" />
      <path d="M626 150L579 328" stroke="#9eb3b8" strokeWidth=".6" />
      <path d="M363 328L380 297l75 8 40 12 25 5 5 29-75-9z" fill="#82959a" stroke="#52605f" strokeWidth=".6" />
      <path d="M366 318l84 13 72 12 2 8-74-9-88-14z" fill="#788b90" />
      <path d="M380 295l76 9v4l-76-11z" fill="#d8c18c" stroke="#39352b" />
      <path d="M518 319q4 6 6 32M521 319q5 9 6 31" stroke="#50524a" strokeWidth="1.300" />

      {/* lower flap */}
      <path d="M306 243l-16 34 71 50 12-31 14-18" stroke="#283235" />
      <path d="M298 271l87 7-1 9-88-12z" fill="#424c4e" />
      <path d="M296 276l85 11-6 9-13 31-68-49z" fill="#839499" />
      <path d="M306 244l-18 31 5 2 16-31z" fill="#72868b" stroke="#2d393c" />
      <path d="M306 243l12 3 32 8 3 4-45-8z" fill="#c8dfe6" />
      <path d="M374 296l6 1-13 31-5-1z" fill="#b9d0d6" stroke="#333f42" strokeWidth=".8" />
      <path d="M314 267l14-22M317 267l14-22" stroke="#a8b9bc" />
      <path d="M316 229l71 48" stroke="#2f3a3d" />

      {/* bores */}
      <ellipse cx="554" cy="167" rx="12" ry="13" fill="#cfc09a" stroke="#3f3a2b" />
      <path d="M543 171q11-4 13-16M546 177q14-4 17-18" stroke="#5b523a" strokeWidth=".8" />
      <circle cx="499" cy="189" r="12" stroke="#a5aca4" strokeWidth=".8" />
      <circle cx="445" cy="292" r="5" stroke="#97a09a" strokeWidth=".7" />
      {bores.map(([x, y]) => (
        <g key={x + y}>
          <circle cx={x} cy={y} r="5" fill="#a3946c" stroke="#38352a" strokeWidth=".9" />
          <path d={`M${x - 3} ${y + 3}q6-1 6-7q4 7-6 7`} fill="#e2d5b0" stroke="#4b4534" strokeWidth=".5" />
        </g>
      ))}
      <path d="M499 239l4 1 4 19-4 0z" fill="#cdc4a2" />
      <path d="M481 240l14 20-8-8M494 255l9 6" stroke="#7d765b" strokeWidth=".8" />

      {/* rotation handle */}
      <path d="M530 328a28 28 0 0 1 56 0a28 28 0 0 1-25 28M530 328a28 28 0 0 0 14 24" stroke="#5594ba" strokeWidth="8" />
      <path d="M589 316a32 32 0 0 1-28 44l0-7a25 25 0 0 0 21-28z" fill="#80bce3" stroke="#3788be" strokeWidth=".7" />
      <circle cx="558" cy="328" r="24" fill="#8d866c" stroke="#4a7fa0" strokeWidth=".7" />
      <circle cx="558" cy="328" r="19" stroke="#35393a" strokeDasharray="2 3" />
      <circle cx="559" cy="328" r="13" fill="#7e8577" stroke="#35393a" strokeWidth="1.400" strokeDasharray="2 2" />
      <ellipse cx="555" cy="328" rx="10" ry="11" fill="#9badb0" />
      <path d="M545 331q2-12 9-15-1 10-9 15zM547 337q8-4 10-9l1 12q-6 1-11-3z" fill="#e7eff0" stroke="#4d5c60" strokeWidth=".6" />
      <path d="M558 330l-9 30M559 330l3 30" stroke="#3d9ad4" strokeWidth=".9" strokeDasharray="3 1" />
      <path d="M549 361h12" stroke="#7dbbe0" strokeDasharray="2 1" />
      <circle cx="549" cy="361" r="2.800" fill="#1f8fd6" />
      <path d="M560 330l13 8" stroke="#c99a25" strokeWidth="2" />
      <path d="M572 335l6 7-8-2z" fill="#dba92b" />
      <circle cx="558" cy="328" r="3.700" fill="#f07d13" stroke="#c45f08" strokeWidth=".6" />

      <path d="M582 349l9 4-3 1 52 63-55-60-2 2z" fill="#e8413c" />
    </svg>
  );
}

function Triad() {
  return (
    <svg viewBox="0 0 40 44" className="absolute bottom-[20px] left-[8px] h-11 w-10">
      <g fill="#d3d5d6" stroke="#a8aaab" strokeWidth=".7">
        <path d="M11 18l9-4 7 3v12l-9 4-7-3z" />
        <path d="M11 18l7 2 9-3M18 20v13M20 14v12l7 3M20 26l-9 4" fill="none" />
      </g>
      <path d="M9 31l18-6" stroke="#46a35a" />
      <path d="M26 23l4 2-3 3z" fill="#3f9a50" />
      <path d="M8 31V13" stroke="#2148b8" strokeWidth="1.500" />
      <path d="M6 16l2-7 2 7z" fill="#2148b8" />
      <path d="M9 31l7 5" stroke="#b32929" strokeWidth="2" />
      <path d="M14 33l6 5-7-1z" fill="#b32929" />
      <circle cx="9" cy="31" r="1.800" fill="#eee" stroke="#777" strokeWidth=".6" />
      <g fontSize="7" fontFamily="Liberation Sans, sans-serif">
        <text x="5" y="9" fill="#2f55c4">Z</text>
        <text x="30" y="27" fill="#3f9a50">Y</text>
        <text x="17" y="42" fill="#c03a3a">X</text>
      </g>
    </svg>
  );
}

function FloatingAngle() {
  return (
    <div className="absolute top-[230px] left-[455px] flex h-[17px] items-center border border-[#9a9a9a] bg-[#dcdcdc] pr-[2px] text-[#222]">
      <div className="h-full w-[5px] bg-black bg-[radial-gradient(#999_30%,transparent_40%)] bg-[length:2px_2px]" />
      <button type="button" aria-label="运动类型" className="mx-[2px] flex h-[13px] w-6 items-center justify-between border border-[#8c8c8c] bg-white pl-[3px]">
        <AngleIcon />
        <ArrowBox />
      </button>
      <label htmlFor="float-angle" className="mx-px">角度</label>
      <div className="flex h-[13px] w-8 items-center border border-[#8c8c8c] bg-white">
        <input id="float-angle" defaultValue="339" className="w-0 flex-1 pl-px" />
        <ArrowBox spin />
      </div>
    </div>
  );
}

export default function App() {
  return (
    <div className="relative flex min-h-screen flex-col overflow-hidden bg-[#e3e3e3] font-['Noto_Sans_CJK_SC','Noto_Sans',sans-serif] text-[7px] leading-[9px]">
      <MenuBar />
      <Toolbars />
      <main className="relative flex-1 bg-linear-to-b from-[#afb0b2] via-[#cfd0d2] via-45% to-[#e6e8ea] to-80%">
        <Model />
        <FloatingAngle />
        <p className="absolute top-[353px] left-[614px] text-[10px] leading-[14px] text-[#c63fd0]">类似在建模环境下这样?</p>
        <Triad />
        <p className="absolute bottom-[2px] left-0 font-medium text-[#eda05a]">三轴测图 工作 摄像机 正三轴测图</p>
      </main>
      <MoveDialog />
    </div>
  );
}
